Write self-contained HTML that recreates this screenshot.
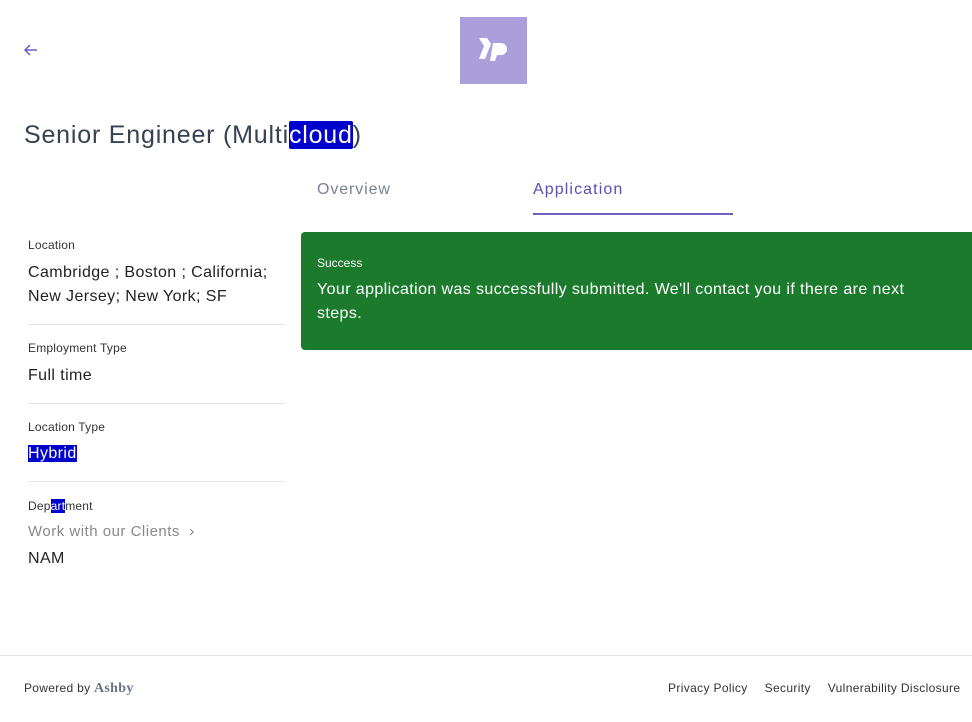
<!DOCTYPE html>
<html><head><style>
body{margin:0;width:972px;height:722px;background:#fff;font-family:"Liberation Sans",sans-serif;position:relative;overflow:hidden;color:#1f2937}
.a{position:absolute;white-space:nowrap}
.sel{background:#0000cc;color:#fff}
.lbl{font-size:12px;color:#333;letter-spacing:0.2px}
.val{font-size:16px;color:#222;line-height:24px;letter-spacing:0.4px}
.hr{position:absolute;left:28px;width:257px;height:1px;background:#e5e5e5}
</style></head><body>
<svg class="a" style="left:23px;top:42px" width="16" height="16" viewBox="0 0 16 16"><path d="M14 8H2M7 3L2 8l5 5" stroke="#6f5fbf" stroke-width="1.5" fill="none"/></svg>
<div class="a" style="left:460px;top:17px;width:67px;height:67px;background:#ab9fdb"></div>
<svg class="a" style="left:477px;top:35px" width="34" height="30" viewBox="0 0 34 30"><path d="M2 3h8l4 6-6 15H2l5-13z" fill="#fff"/><path d="M16 8h8a6 6 0 010 12h-4l-2 6h-5z" fill="#fff"/></svg>
<div class="a" style="left:24px;top:121px;font-size:25px;color:#374151;letter-spacing:0.8px;font-weight:500">Senior Engineer (Multi<span class="sel" style="border-radius:2px">cloud</span>)</div>
<div class="a" style="left:317px;top:181px;font-size:16px;color:#7b8290;letter-spacing:0.9px">Overview</div>
<div class="a" style="left:533px;top:181px;font-size:16px;color:#5b4fb0;letter-spacing:1.1px">Application</div>
<div class="a" style="left:533px;top:213px;width:200px;height:2px;background:#6f5fbf"></div>
<div class="a lbl" style="left:28px;top:238px">Location</div>
<div class="a val" style="left:28px;top:261px">Cambridge ; Boston ; California;<br>New Jersey; New York; SF</div>
<div class="hr" style="top:324px"></div>
<div class="a lbl" style="left:28px;top:341px">Employment Type</div>
<div class="a val" style="left:28px;top:364px">Full time</div>
<div class="hr" style="top:403px"></div>
<div class="a lbl" style="left:28px;top:420px">Location Type</div>
<div class="a val" style="left:28px;top:442px"><span class="sel">Hybrid</span></div>
<div class="hr" style="top:481px"></div>
<div class="a lbl" style="left:28px;top:499px">Dep<span class="sel">art</span>ment</div>
<div class="a" style="left:28px;top:523px;font-size:15px;color:#888;letter-spacing:0.5px">Work with our Clients &nbsp;›</div>
<div class="a val" style="left:28px;top:547px">NAM</div>
<div class="a" style="left:301px;top:232px;width:671px;height:118px;background:#1c7a2d;border-radius:4px 0 0 4px;color:#fff">
<div style="position:absolute;left:16px;top:24px;font-size:12px">Success</div>
<div style="position:absolute;left:16px;top:46px;font-size:16px;line-height:24px;white-space:normal;width:620px;letter-spacing:0.4px">Your application was successfully submitted. We'll contact you if there are next steps.</div>
</div>
<div class="a" style="left:0;top:655px;width:972px;height:1px;background:#e5e5e5"></div>
<div class="a" style="left:24px;top:681px;font-size:12px;color:#333;letter-spacing:0.3px">Powered by <span style="font-family:'Liberation Serif',serif;font-weight:bold;font-size:14px;color:#6b7280">Ashby</span></div>
<div class="a" style="left:668px;top:681px;font-size:12px;color:#333;letter-spacing:0.35px">Privacy Policy<span style="margin-left:17px">Security</span><span style="margin-left:17px">Vulnerability Disclosure</span></div>
</body></html>
